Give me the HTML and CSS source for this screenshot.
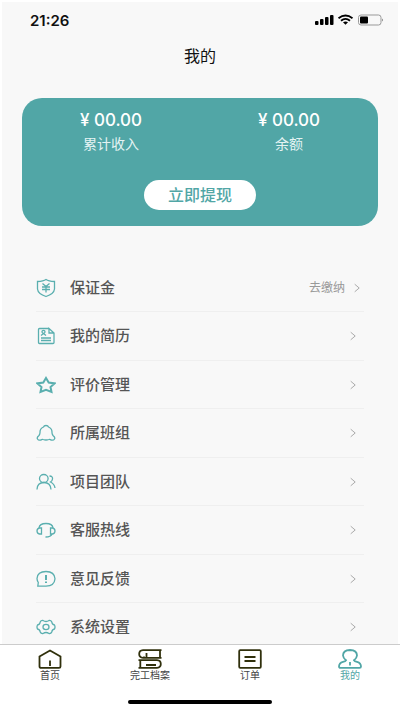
FILE: index.html
```html
<!DOCTYPE html>
<html lang="zh-CN">
<head>
<meta charset="utf-8">
<meta name="viewport" content="width=device-width, initial-scale=1">
<title>我的</title>
<link rel="stylesheet" href="styles.css">
</head>
<body>
<div class="page">
  <div class="status">
    <span class="time">21:26</span>
    <svg class="signals" width="69" height="12" viewBox="0 0 69 12" aria-hidden="true">
      <g fill="#000">
        <rect x="0" y="7" width="3.500" height="4" rx="1"/><rect x="5" y="5" width="3.500" height="6" rx="1"/>
        <rect x="10" y="3" width="3.500" height="8" rx="1"/><rect x="15" y="1" width="3.500" height="10" rx="1"/>
        <path d="M28 8.300Q30.500 6.500 33 8.300L30.500 10.800Z"/>
        <rect x="45" y="2.500" width="8" height="7" rx="1"/>
      </g>
      <g fill="none" stroke="#000" stroke-width="1.800">
        <path d="M23.500 4.200Q30.500-1.200 37.500 4.200"/><path d="M26 6.700Q30.500 3 35 6.700"/>
      </g>
      <rect x="43.500" y="1" width="22.500" height="10" rx="2.500" fill="none" stroke="#999"/>
      <path d="M67 4.500Q69 6 67 7.500Z" fill="#888"/>
    </svg>
  </div>
  <h1 class="title">我的</h1>

  <section class="card">
    <dl class="sums">
      <div class="sum"><dt>累计收入</dt><dd>¥ 00.00</dd></div>
      <div class="sum"><dt>余额</dt><dd>¥ 00.00</dd></div>
    </dl>
    <button class="withdraw" type="button">立即提现</button>
  </section>

  <main class="menu">
    <a class="row first" href="#">
      <svg class="icon" viewBox="0 0 20 20"><path d="M10 1.500Q12.500 3.300 18.500 3.500V11Q18 16 10 18.500Q2 16 1.500 11V3.500Q7.500 3.300 10 1.500Z"/><path d="M6.500 5.500L10 8.500L13.500 5.500M10 8.500V14.500M6 9H14M6 11.500H14"/></svg>
      <span class="name">保证金</span><span class="note">去缴纳</span>
      <svg class="arrow" viewBox="0 0 6 10"><path d="M.7 1.200L5.200 5L.7 8.800"/></svg>
    </a>
    <a class="row" href="#">
      <svg class="icon" viewBox="0 0 20 20"><path d="M13 2.500H3.500Q2.500 2.500 2.500 3.500V16.500Q2.500 17.500 3.500 17.500H17Q18 17.500 18 16.500V7L13 2.500V7H18M5 12H15M5 14.500H15M5 9.500L7.500 7.500L10 9.500"/><circle cx="7.500" cy="5.800" r="1.500"/></svg>
      <span class="name">我的简历</span>
      <svg class="arrow" viewBox="0 0 6 10"><path d="M.7 1.200L5.200 5L.7 8.800"/></svg>
    </a>
    <a class="row" href="#">
      <svg class="icon bold" viewBox="0 0 20 20"><path d="M10 3L12.700 7.600L18.500 8.400L14.500 12L15.500 17L10 14.900L4.500 17L5.500 12L1.500 8.400L7.300 7.600Z"/></svg>
      <span class="name">评价管理</span>
      <svg class="arrow" viewBox="0 0 6 10"><path d="M.7 1.200L5.200 5L.7 8.800"/></svg>
    </a>
    <a class="row" href="#">
      <svg class="icon" viewBox="0 0 20 20"><path d="M10 2.500Q12 2.500 12.500 4Q16 5.500 16 9Q15.800 11 17 12.500Q19.500 14.500 18.500 16Q17.500 17.700 15 17Q14 16 12.800 16.500Q10 17.500 7.200 16.500Q6 16 5 17Q2.500 17.700 1.500 16Q.5 14.500 3 12.500Q4.200 11 4 9Q4 5.500 7.500 4Q8 2.500 10 2.500Z"/></svg>
      <span class="name">所属班组</span>
      <svg class="arrow" viewBox="0 0 6 10"><path d="M.7 1.200L5.200 5L.7 8.800"/></svg>
    </a>
    <a class="row" href="#">
      <svg class="icon" viewBox="0 0 20 20"><ellipse cx="7.800" cy="6.500" rx="4.300" ry="4"/><path d="M1 17.500Q1.200 10.500 8 10.500Q14.500 10.500 15 17.500M13.500 4Q17 4.200 16.500 7Q16.300 9 14.500 10Q18.500 12 19 16"/></svg>
      <span class="name">项目团队</span>
      <svg class="arrow" viewBox="0 0 6 10"><path d="M.7 1.200L5.200 5L.7 8.800"/></svg>
    </a>
    <a class="row" href="#">
      <svg class="icon" viewBox="0 0 20 20"><path d="M3 8Q3.500 3.500 10 3.500Q16.500 3.500 17 8"/><path d="M5.500 8H3.500Q1 8.500 1 11Q1 13.500 3.500 14H5.500ZM14.500 8H16.500Q19 8.500 19 11Q19 13.500 16.500 14H14.500ZM16 14Q15 17 9.500 17"/></svg>
      <span class="name">客服热线</span>
      <svg class="arrow" viewBox="0 0 6 10"><path d="M.7 1.200L5.200 5L.7 8.800"/></svg>
    </a>
    <a class="row" href="#">
      <svg class="icon" viewBox="0 0 20 20"><path d="M1.800 17.200L2.300 13.500Q1 11.500 1 9.500Q1.500 2.500 10 2.500Q18.500 2.500 19 9.800Q18.500 17 10 17.200Z"/><path class="heavy" d="M10 6V11M10 12.500V14"/></svg>
      <span class="name">意见反馈</span>
      <svg class="arrow" viewBox="0 0 6 10"><path d="M.7 1.200L5.200 5L.7 8.800"/></svg>
    </a>
    <a class="row" href="#">
      <svg class="icon" viewBox="0 0 20 20"><path d="M7 3.500Q10 5.500 13 3.500Q15 3.200 15.800 5Q16 7.500 18.500 8Q19.500 10 18.500 12Q16 12.500 15.800 15Q15 16.800 13 16.500Q10 14.500 7 16.500Q5 16.800 4.200 15Q4 12.500 1.500 12Q.5 10 1.500 8Q4 7.500 4.200 5Q5 3.200 7 3.500Z"/><ellipse cx="10" cy="10" rx="3" ry="2.600"/></svg>
      <span class="name">系统设置</span>
      <svg class="arrow" viewBox="0 0 6 10"><path d="M.7 1.200L5.200 5L.7 8.800"/></svg>
    </a>
  </main>

  <footer class="dock">
    <nav class="tabs">
      <a class="tab" href="#"><svg class="glyph" viewBox="0 0 24 20"><path d="M12 1.500L22.500 7.500V17.500Q22.500 18.800 21 18.800H3Q1.500 18.800 1.500 17.500V7.500ZM12 11.500V17"/></svg>首页</a>
      <a class="tab" href="#"><svg class="glyph" viewBox="0 0 24 20"><path d="M23.500 1.200H5Q1.200 1.500 1.200 5Q1.200 8.500 5 8.800H23.500M22 1.500V8.500M8.500 4V8.500M6 7.500V8.500M.5 11.200H19Q22.800 11.500 22.800 15Q22.800 18.500 19 18.800H.5M2.300 11.500V18.500M8 16H18"/></svg>完工档案</a>
      <a class="tab" href="#"><svg class="glyph" viewBox="0 0 24 20"><rect x="1.200" y="1.200" width="21.600" height="17.600" rx="1"/><path d="M6.500 8H17.500M6.500 12H17.500"/></svg>订单</a>
      <a class="tab active" href="#"><svg class="glyph" viewBox="0 0 24 20"><path d="M12 1Q19 1.200 19 6.500Q18.800 9 16 11.300Q16.500 12.300 19 12.800Q23 14 23 17.500Q23 18.800 21.500 18.800H2.500Q1 18.800 1 17.500Q1 14 5 12.800Q7.500 12.300 8 11.300Q5.200 9 5 6.500Q5 1.200 12 1ZM12 13V16.500"/></svg>我的</a>
    </nav>
    <div class="home-bar"></div>
  </footer>
</div>
</body>
</html>
```
FILE: styles.css
```css
* { box-sizing: border-box; }

body {
  margin: 0;
  background: #fff;
  font-family: Inter, "Noto Sans CJK SC", sans-serif;
  color: #111;
}

a { color: inherit; text-decoration: none; }

.page {
  display: flex;
  flex-direction: column;
  height: 100vh;
  background: #f8f8f8;
  border: solid #fff;
  border-width: 2px 2px 0;
}

.status {
  flex: none;
  display: flex;
  justify-content: space-between;
  align-items: center;
  height: 36px;
  padding: 0 14px 0 28px;
}

.time { font-size: 15px; font-weight: 600; }

.title {
  flex: none;
  margin: 0;
  font-size: 16px;
  font-weight: 400;
  line-height: 36px;
  text-align: center;
}

.card {
  flex: none;
  display: flex;
  flex-direction: column;
  align-items: center;
  margin: 24px 20px 0;
  height: 128px;
  padding-top: 12px;
  border-radius: 20px;
  background: #51a6a6;
  color: #fff;
}

.sums {
  display: grid;
  grid-template-columns: 1fr 1fr;
  width: 100%;
  margin: 0 0 24px;
}

.sum {
  display: flex;
  flex-direction: column-reverse;
  align-items: center;
  gap: 2px;
}

.sum dt { font-size: 14px; line-height: 24px; color: #e4f3f3; }
.sum dd { margin: 0; font-size: 17px; font-weight: 500; line-height: 20px; }

.withdraw {
  width: 112px;
  height: 30px;
  padding: 0;
  border: 0;
  border-radius: 15px;
  background: #fff;
  color: #51a6a6;
  font: 500 16px/28px Inter, "Noto Sans CJK SC", sans-serif;
}

.menu {
  flex: 1;
  min-height: 0;
  display: grid;
  grid-auto-rows: 48px 49px;
  margin: 38px 34px 0;
  overflow: hidden;
}

.row {
  display: flex;
  align-items: center;
  padding-right: 8px;
  border-bottom: 1px solid #efefef;
}

.row.first { padding-right: 4px; }

.icon {
  width: 20px;
  height: 20px;
  margin-right: 14px;
  fill: none;
  stroke: #5aafaf;
  stroke-width: 1.300;
}

.icon.bold { stroke-width: 2; }
.heavy { stroke-width: 2; }

.name { flex: 1; font-size: 15px; font-weight: 500; line-height: 20px; color: #555; }

.note { margin-right: 9px; font-size: 12px; line-height: 20px; color: #999; }

.arrow {
  width: 6px;
  height: 10px;
  fill: none;
  stroke: #aaa;
}

.dock {
  flex: none;
  margin: 0 -2px;
  padding-bottom: 7px;
  border-top: 1px solid #ccc;
  background: #fff;
}

.tabs { display: grid; grid-template-columns: repeat(4, 1fr); }

.tab {
  display: flex;
  flex-direction: column;
  align-items: center;
  height: 55px;
  padding-top: 4px;
  font-size: 10px;
  line-height: 12px;
  color: #444;
}

.glyph {
  width: 24px;
  height: 20px;
  fill: none;
  stroke: #30300c;
  stroke-width: 1.800;
}

.active { color: #51a6a6; }
.active .glyph { stroke: #51a6a6; }

.home-bar {
  width: 36%;
  height: 4px;
  margin: 0 auto;
  border-radius: 2px;
  background: #000;
}
```
